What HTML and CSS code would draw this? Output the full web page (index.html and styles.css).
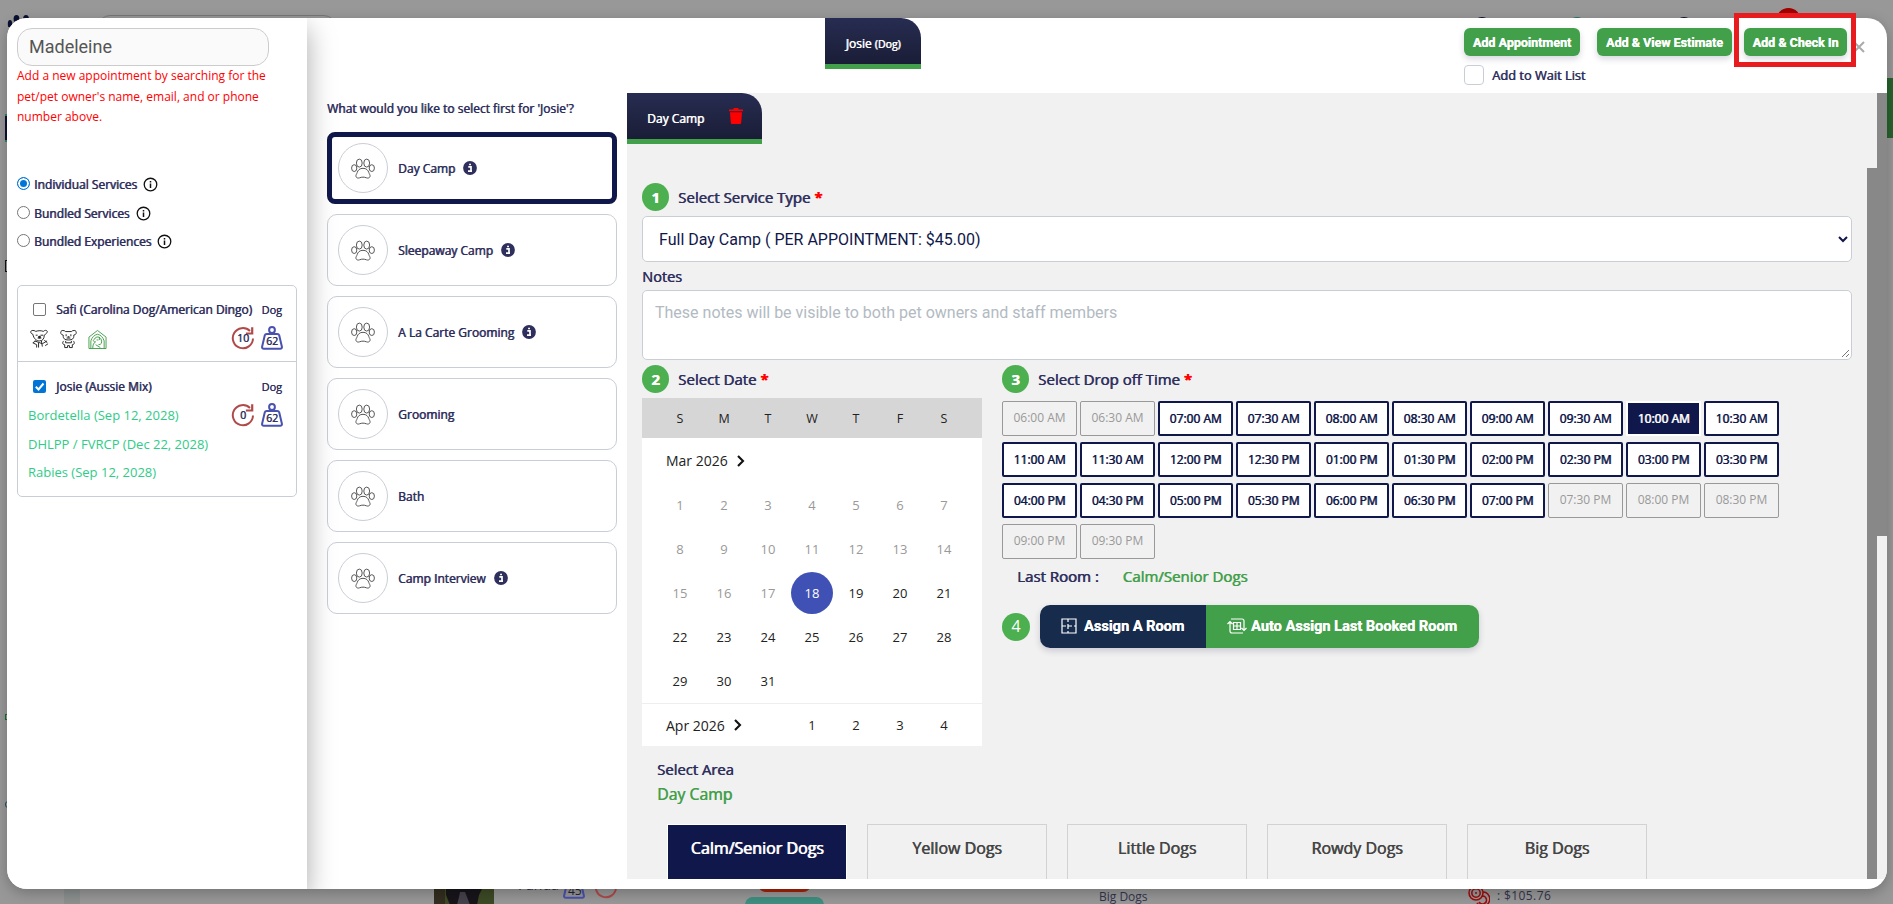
FILE: index.html
```
<!DOCTYPE html>
<html lang="en">
<head>
  <meta charset="UTF-8">
  <meta name="viewport" content="width=device-width, initial-scale=1.0">
  <title>Add Appointment</title>
  <link rel="stylesheet" href="styles.css">
</head>
<body>
  <!-- shared icons -->
  <svg class="sprite" aria-hidden="true">
    <symbol id="paw" viewBox="0 0 24 20">
      <g fill="none" stroke="#555" stroke-width="1">
        <ellipse cx="8.3" cy="4.6" rx="2.9" ry="4"/>
        <ellipse cx="15.7" cy="4.6" rx="2.9" ry="4"/>
        <ellipse cx="3.2" cy="9.6" rx="2.6" ry="3.4"/>
        <ellipse cx="20.8" cy="9.6" rx="2.6" ry="3.4"/>
        <path d="M12 9.8c-3.4 0-5.2 2-5.8 4.2-.5 1.8-1.6 2.4-1.2 4 .4 1.500 2.200 1.900 3.600 1.300 2.200-.9 4.600-.9 6.800 0 1.400.6 3.200.2 3.600-1.300.4-1.600-.7-2.200-1.200-4-.6-2.200-2.400-4.200-5.800-4.200z"/>
      </g>
    </symbol>
    <symbol id="info-o" viewBox="0 0 16 16">
      <circle cx="8" cy="8" r="6.700" fill="none" stroke="#111" stroke-width="1.400"/>
      <path d="M8 7v4.600M8 4.200v1.700" stroke="#111" stroke-width="1.600"/>
    </symbol>
    <symbol id="info" viewBox="0 0 14 14">
      <circle cx="7" cy="7" r="6.900" fill="#2f2f5d"/>
      <path d="M5.300 5.800h2.700v4.200M5 10.100h4M6.100 3.500h1.900" fill="none" stroke="#fff" stroke-width="1.700"/>
    </symbol>
    <symbol id="cycle" viewBox="0 0 24 24">
      <path d="M22 12.500A10.100 10.100 0 1 1 19 5" fill="none" stroke="#b04a4a" stroke-width="2"/>
      <path d="M21.200 1.200v6.300h-6.300" fill="none" stroke="#b04a4a" stroke-width="2.200"/>
    </symbol>
    <symbol id="weight" viewBox="0 0 22 24">
      <circle cx="11" cy="4" r="2.900" fill="none" stroke="#4a52b0" stroke-width="2"/>
      <path d="M5.700 7.900h10.600q1.500 0 1.900 1.400l2.700 11.400q.3 2-1.700 2H2.800q-2 0-1.700-2L3.800 9.300q.4-1.400 1.900-1.400z" fill="none" stroke="#4a52b0" stroke-width="2"/>
    </symbol>
    <symbol id="chevron" viewBox="0 0 8 12">
      <path d="M1 1l5 5-5 5" fill="none" stroke="#111" stroke-width="2.100"/>
    </symbol>
  </svg>

  <!-- dimmed dashboard behind the modal -->
  <div class="backdrop">
    <svg class="page-logo" viewBox="0 0 24 12" width="24" height="12"><g fill="#0a1030"><ellipse cx="3" cy="9" rx="2.200" ry="4"/><ellipse cx="9.500" cy="4" rx="2.900" ry="4"/><ellipse cx="19" cy="4" rx="2.900" ry="4"/></g></svg>
    <div class="page-search"></div>
    <i class="dot dot-1"></i><i class="dot dot-2"></i><i class="dot dot-3"></i><i class="dot dot-4"></i>
    <div class="page-green"></div>
    <div class="edge edge-navy"></div>
    <div class="edge edge-box"></div>
    <div class="edge edge-green"></div>
    <div class="edge edge-teal"></div>
    <div class="page-strip"></div>
    <svg class="page-photo" viewBox="0 0 60 16" width="60" height="16">
      <rect width="60" height="16" fill="#3d4a25"/>
      <path d="M12 0h36l-3 6-2 10H16L12 6z" fill="#17151a"/>
      <path d="M26 3h5l2 5 3 8H23l2-8z" fill="#45424c"/>
      <path d="M0 0h11v16H0z" fill="#332e20"/>
    </svg>
    <span class="page-owner">Funda</span>
    <svg class="page-weight" width="22" height="24"><use href="#weight"/></svg>
    <span class="page-lbs">45</span>
    <svg class="page-cycle" width="24" height="24"><use href="#cycle"/></svg>
    <div class="pill pill-red"></div>
    <div class="pill pill-teal"></div>
    <span class="page-room">Big Dogs</span>
    <svg class="page-coin" viewBox="0 0 22 20" width="22" height="20"><g fill="none" stroke="#a00b0b" stroke-width="1.500"><circle cx="8" cy="6" r="7"/><circle cx="8" cy="6" r="4.200"/><path d="M15 5a7 7 0 1 1-6 11M14 9a4 4 0 1 1-3 6"/></g><circle cx="8" cy="6" r="1" fill="#a00b0b"/></svg>
    <span class="page-price">: $105.76</span>
  </div>

  <div class="modal">
    <aside class="sidebar">
      <div class="search">Madeleine</div>
      <p class="hint">Add a new appointment by searching for the<br>pet/pet owner's name, email, and or phone<br>number above.</p>

      <div class="service-kinds">
        <label class="kind"><span class="radio on"></span>Individual Services<svg width="15" height="15"><use href="#info-o"/></svg></label>
        <label class="kind"><span class="radio"></span>Bundled Services<svg width="15" height="15"><use href="#info-o"/></svg></label>
        <label class="kind"><span class="radio"></span>Bundled Experiences<svg width="15" height="15"><use href="#info-o"/></svg></label>
      </div>

      <div class="pets">
        <div class="pet">
          <div class="pet-head"><span class="check"></span><span class="pet-name">Safi (Carolina Dog/American Dingo)</span><span class="species">Dog</span></div>
          <div class="pet-info">
            <div class="pet-icons">
              <svg class="pet-icon" viewBox="0 0 20 20" width="19" height="20"><g fill="none" stroke="#222" stroke-width="1"><path d="M3 5c-3-1-3-4 0-4 2 0 3 1 3 1 3-1 6-1 8 0 2-2 5-1 4 1s-2 2-3 3c0 4-2 6-5 6S4 10 3 5z"/><path d="M6 6h2M11 6h3M8 9h4M6 12l-3 2 4 2v3M12 12l1 6M15 11l3 3M13 15l5-3M16 17l3-2M9 14v5M5 12l8 3"/></g><circle cx="10" cy="8" r="1.500" fill="#222"/></svg>
              <svg class="pet-icon" viewBox="0 0 20 20" width="19" height="20"><g fill="none" stroke="#222" stroke-width="1"><path d="M4.500 6C1 5.500 1 1 4 1q2 0 3 1.200h6Q14 1 16 1c3 0 3 4.500-.5 5 .5 3.500-1.500 5-5.500 5S4 9.500 4.500 6z"/><path d="M8 9h4M5 12c-2 2-1 4 1 4M15 12c2 2 1 4-1 4M7 12v2h6v-2M6 16v3h3v-2h2v2h3v-3"/></g><path d="M7 5h1v2H7zM12 5h1v2h-1zM9 7h2v1.500H9z" fill="#222"/></svg>
              <svg class="pet-icon" viewBox="0 0 20 20" width="19" height="20"><g fill="none" stroke="#43a04a" stroke-width="1"><path d="M1 20V8l9-7 9 7v12zM3 20v-8q2-6 7-7 5 1 7 7v8M5 20c0-4 1-6 3-7-3 0-3-2-1-3 1-3 6-3 7 1 1 3 0 5-3 5M8 16l5 3M9 11h2M12 8v3"/></g></svg>
            </div>
            <div class="badges">
              <span class="badge"><svg width="24" height="24"><use href="#cycle"/></svg><b>10</b></span>
              <span class="badge weight"><svg width="22" height="24"><use href="#weight"/></svg><b>62</b></span>
            </div>
          </div>
        </div>
        <div class="pet">
          <div class="pet-head"><span class="check on"><svg viewBox="0 0 13 13" width="13" height="13"><path d="M2.800 6.800l2.700 2.700 5-6" fill="none" stroke="#fff" stroke-width="2"/></svg></span><span class="pet-name">Josie (Aussie Mix)</span><span class="species">Dog</span></div>
          <div class="pet-info">
            <ul class="vaccines">
              <li>Bordetella (Sep 12, 2028)</li>
              <li>DHLPP / FVRCP (Dec 22, 2028)</li>
              <li>Rabies (Sep 12, 2028)</li>
            </ul>
            <div class="badges">
              <span class="badge"><svg width="24" height="24"><use href="#cycle"/></svg><b>0</b></span>
              <span class="badge weight"><svg width="22" height="24"><use href="#weight"/></svg><b>62</b></span>
            </div>
          </div>
        </div>
      </div>
    </aside>

    <main class="main">
      <header class="topbar">
        <div class="tab pet-tab">Josie <small>(Dog)</small></div>
        <div class="actions">
          <div class="action-row">
            <button class="btn add">Add Appointment</button>
            <button class="btn estimate">Add &amp; View Estimate</button>
            <button class="btn checkin">Add &amp; Check In</button>
          </div>
          <label class="wait"><span class="wait-box"></span>Add to Wait List</label>
        </div>
        <svg class="close" viewBox="0 0 12 12" width="12" height="12"><path d="M1 1l10 10M11 1L1 11" stroke="#aaa" stroke-width="2"/></svg>
      </header>

      <div class="content">
        <section class="services">
          <h2 class="services-title">What would you like to select first for 'Josie'?</h2>
          <div class="service selected"><span class="paw"><svg width="24" height="21"><use href="#paw"/></svg></span>Day Camp<svg class="info" width="14" height="14"><use href="#info"/></svg></div>
          <div class="service"><span class="paw"><svg width="24" height="21"><use href="#paw"/></svg></span>Sleepaway Camp<svg class="info" width="14" height="14"><use href="#info"/></svg></div>
          <div class="service"><span class="paw"><svg width="24" height="21"><use href="#paw"/></svg></span>A La Carte Grooming<svg class="info" width="14" height="14"><use href="#info"/></svg></div>
          <div class="service"><span class="paw"><svg width="24" height="21"><use href="#paw"/></svg></span>Grooming</div>
          <div class="service"><span class="paw"><svg width="24" height="21"><use href="#paw"/></svg></span>Bath</div>
          <div class="service"><span class="paw"><svg width="24" height="21"><use href="#paw"/></svg></span>Camp Interview<svg class="info" width="14" height="14"><use href="#info"/></svg></div>
        </section>

        <section class="details">
          <div class="detail-tabs">
            <div class="tab camp-tab">Day Camp
              <svg viewBox="0 0 14 16" width="14" height="16"><path d="M0 1.500h4L5 0h4l1 1.500h4v1.800H0zM1 4.300h12l-.8 10.500q-.1 1.200-1.300 1.200H3.100q-1.200 0-1.300-1.200z" fill="#f00"/></svg>
            </div>
          </div>
          <div class="scroller">
            <div class="form">
              <h3 class="step"><span class="num">1</span>Select Service Type <em>*</em></h3>
              <div class="select">Full Day Camp ( PER APPOINTMENT: $45.00)<svg viewBox="0 0 10 7" width="10" height="7"><path d="M1 1l4 4 4-4" fill="none" stroke="#10174a" stroke-width="2"/></svg></div>
              <h3 class="notes-label">Notes</h3>
              <div class="notes">These notes will be visible to both pet owners and staff members
                <svg viewBox="0 0 9 9" width="9" height="9"><path d="M1 8l7-7M5 8l3-3" stroke="#777" stroke-width="1"/></svg>
              </div>

              <div class="schedule">
                <div class="date">
                  <h3 class="step"><span class="num">2</span>Select Date <em>*</em></h3>
                  <div class="calendar">
                    <div class="week head"><span>S</span><span>M</span><span>T</span><span>W</span><span>T</span><span>F</span><span>S</span></div>
                    <div class="month">Mar 2026<svg width="8" height="12"><use href="#chevron"/></svg></div>
                    <div class="week past"><span>1</span><span>2</span><span>3</span><span>4</span><span>5</span><span>6</span><span>7</span></div>
                    <div class="week past"><span>8</span><span>9</span><span>10</span><span>11</span><span>12</span><span>13</span><span>14</span></div>
                    <div class="week"><span class="off">15</span><span class="off">16</span><span class="off">17</span><span class="today">18</span><span>19</span><span>20</span><span>21</span></div>
                    <div class="week"><span>22</span><span>23</span><span>24</span><span>25</span><span>26</span><span>27</span><span>28</span></div>
                    <div class="week"><span>29</span><span>30</span><span>31</span></div>
                    <div class="week next"><span class="month-name">Apr 2026<svg width="8" height="12"><use href="#chevron"/></svg></span><span>1</span><span>2</span><span>3</span><span>4</span></div>
                  </div>
                </div>

                <div class="time">
                  <h3 class="step"><span class="num">3</span>Select Drop off Time <em>*</em></h3>
                  <div class="slots">
                    <span class="slot off">06:00 AM</span><span class="slot off">06:30 AM</span><span class="slot">07:00 AM</span><span class="slot">07:30 AM</span><span class="slot">08:00 AM</span>
                    <span class="slot">08:30 AM</span><span class="slot">09:00 AM</span><span class="slot">09:30 AM</span><span class="slot active">10:00 AM</span><span class="slot">10:30 AM</span>
                    <span class="slot">11:00 AM</span><span class="slot">11:30 AM</span><span class="slot">12:00 PM</span><span class="slot">12:30 PM</span><span class="slot">01:00 PM</span>
                    <span class="slot">01:30 PM</span><span class="slot">02:00 PM</span><span class="slot">02:30 PM</span><span class="slot">03:00 PM</span><span class="slot">03:30 PM</span>
                    <span class="slot">04:00 PM</span><span class="slot">04:30 PM</span><span class="slot">05:00 PM</span><span class="slot">05:30 PM</span><span class="slot">06:00 PM</span>
                    <span class="slot">06:30 PM</span><span class="slot">07:00 PM</span><span class="slot off">07:30 PM</span><span class="slot off">08:00 PM</span><span class="slot off">08:30 PM</span>
                    <span class="slot off">09:00 PM</span><span class="slot off">09:30 PM</span>
                  </div>
                  <div class="last-room"><span>Last Room :</span><span class="green">Calm/Senior Dogs</span></div>
                  <div class="assign">
                    <span class="num four">4</span>
                    <div class="assign-group">
                      <button class="assign-btn navy"><svg viewBox="0 0 16 16" width="16" height="16"><path d="M1 1h14v14H1zM7 1v3M7 6v5M7 13v2M1 8h4M7 8h4M13 8h2" fill="none" stroke="#fff" stroke-width="1.200"/></svg>Assign A Room</button>
                      <button class="assign-btn"><svg viewBox="0 0 20 16" width="20" height="16"><path d="M4 1h11q2 0 2 2v9M14.500 10l2.500 2.500 2.500-2.500M16 15H5q-2 0-2-2V4M.5 6L3 3.500 5.500 6M6.500 4.500h7v7h-7zM10 4.500v7M6.500 8h7" fill="none" stroke="#fff" stroke-width="1.200"/></svg>Auto Assign Last Booked Room</button>
                    </div>
                  </div>
                </div>
              </div>

              <div class="area">
                <h3 class="area-title">Select Area</h3>
                <h3 class="area-title green">Day Camp</h3>
                <div class="rooms">
                  <span class="room active">Calm/Senior Dogs</span>
                  <span class="room">Yellow Dogs</span>
                  <span class="room">Little Dogs</span>
                  <span class="room">Rowdy Dogs</span>
                  <span class="room">Big Dogs</span>
                </div>
              </div>
            </div>
            <div class="thumb"></div>
          </div>
        </section>
        <div class="track"><div class="track-thumb"></div></div>
      </div>
    </main>
  </div>

  <div class="highlight"></div>
</body>
</html>
```
FILE: styles.css
```
* { box-sizing: border-box; }
body { margin: 0; width: 1893px; height: 904px; overflow: hidden; position: relative; background: #989898; font-family: 'Open Sans', 'Noto Sans', sans-serif; color: #2f2f5d; }
h2, h3, p, ul { margin: 0; padding: 0; font-weight: 400; }
ul { list-style: none; }
svg { display: block; flex: none; }
button { border: none; margin: 0; padding: 0; font-family: Roboto, sans-serif; font-weight: 700; color: #fff; background: #43a04a; text-shadow: .3px 0 currentColor; }
.sprite { position: absolute; width: 0; height: 0; }

/* semi-bold look without changing the text width */
.kind, .pet-name, .tab, .wait, .services-title, .service, .step, .notes-label, .slot, .last-room, .area-title, .room { text-shadow: .6px 0 currentColor; }

/* dimmed page */
.backdrop { position: absolute; inset: 0; overflow: hidden; }
.backdrop > * { position: absolute; }
.page-logo { left: 7px; top: 15px; }
.page-search { left: 98px; top: 15px; width: 238px; height: 30px; border: 1px solid #777; border-radius: 12px; }
.dot { width: 16px; height: 16px; border-radius: 50%; top: 17px; background: #0a1030; }
.dot-1 { left: 1474px; }
.dot-2 { left: 1569px; background: #1f7a66; }
.dot-3 { left: 1676px; }
.dot-4 { left: 1776px; top: 8px; width: 25px; height: 25px; background: #a00000; }
.page-green { left: 1880px; top: 78px; width: 13px; height: 60px; background: #28632f; }
.edge { left: 5px; width: 6px; }
.edge-navy { top: 114px; height: 28px; background: #0a1030; border-top: 2px solid #2f8a5a; border-bottom: 2px solid #2f8a5a; }
.edge-box { top: 260px; height: 12px; border: 1px solid #111; }
.edge-green { top: 714px; height: 6px; border: 1px solid #16702a; }
.edge-teal { top: 801px; height: 7px; border: 1px solid #1c5260; border-radius: 3px; }
.page-strip { left: 64px; top: 880px; width: 16px; height: 24px; background: #8c908f; }
.page-photo { left: 434px; top: 889px; }
.page-owner { left: 518px; top: 875px; font-size: 14px; color: #33334d; }
.page-weight { left: 563px; top: 875px; }
.page-lbs { left: 568px; top: 882px; font-size: 12px; color: #22223c; }
.page-cycle { left: 594px; top: 875px; }
.pill { border-radius: 8px; }
.pill-red { left: 758px; top: 876px; width: 53px; height: 16px; background: #a52308; }
.pill-teal { left: 745px; top: 897px; width: 79px; height: 18px; background: #3f8f80; }
.page-room, .page-price { top: 888px; font-size: 12px; line-height: 18px; color: #33334d; }
.page-room { left: 1099px; }
.page-coin { left: 1468px; top: 887px; }
.page-price { left: 1497px; top: 887px; letter-spacing: .4px; }

.modal { position: relative; display: flex; width: 1880px; height: 871px; margin: 18px 0 0 7px; background: #fff; border-radius: 20px; overflow: hidden; box-shadow: 0 4px 14px rgba(0,0,0,.25); }

/* sidebar */
.sidebar { position: relative; width: 300px; flex: none; padding: 10px; background: #fff; box-shadow: 0 10px 26px rgba(0,0,0,.34); }
.search { width: 252px; height: 38px; padding-left: 11px; border: 1px solid #ccc; border-radius: 15px; background: #fafafa; font: 18px/36px Roboto, sans-serif; color: #555; }
.hint { font-size: 12px; line-height: 20.500px; color: #f00; white-space: nowrap; }
.service-kinds { margin-top: 43px; }
.kind { display: flex; align-items: center; height: 28.500px; font-size: 12px; }
.kind svg { margin-left: 6px; }
.radio { width: 13px; height: 13px; margin-right: 4px; border: 1px solid #767676; border-radius: 50%; background: #fff; position: relative; top: -1px; }
.radio.on { border-color: #0075d7; background: #0075d7; box-shadow: inset 0 0 0 2px #fff; }

.pets { margin-top: 29px; border: 1px solid #c9ced6; border-radius: 5px; }
.pet { padding: 13px 13px 0 10px; height: 75px; }
.pet + .pet { height: 135px; padding-top: 14px; border-top: 1px solid #c9ced6; }
.pet-head { display: flex; align-items: center; height: 20px; padding: 0 1px 0 5px; }
.check { width: 13px; height: 13px; border: 1px solid #767676; border-radius: 2px; }
.check.on { border: none; background: #0075d7; }
.pet-name { margin-left: 10px; font-size: 12px; white-space: nowrap; }
.species { margin-left: auto; font-size: 11px; text-shadow: .3px 0 currentColor; }
.pet-info { display: flex; justify-content: space-between; align-items: flex-start; }
.pet-icons { display: flex; gap: 10px; margin: 10px 0 0 2px; }
.badges { display: flex; gap: 6px; margin-top: 7px; }
.badge { position: relative; }
.badge b { position: absolute; inset: 5px 0 0; text-align: center; font-size: 10.500px; line-height: 14px; font-weight: 400; text-shadow: .4px 0 currentColor; }
.badge.weight b { top: 8px; }
.vaccines { font-size: 13px; line-height: 28.500px; color: #2ecc87; white-space: nowrap; margin-top: 5px; }

/* header */
.main { flex: 1; display: flex; flex-direction: column; min-width: 0; }
.topbar { display: flex; height: 75px; padding-left: 518px; }
.tab { height: 51px; border-bottom: 5px solid #43a04a; border-top-right-radius: 20px; background: linear-gradient(#272d52, #1a1d36); color: #fff; font-size: 12px; white-space: nowrap; }
.pet-tab { width: 96px; text-align: center; line-height: 52px; }
.pet-tab small { font-size: 10.500px; }
.actions { margin-left: 543px; padding-top: 10px; }
.action-row { display: flex; }
.btn { height: 28px; border-radius: 6px; font-size: 12.500px; box-shadow: 0 3px 6px rgba(50,50,93,.2); white-space: nowrap; }
.add { width: 116px; }
.estimate { width: 135px; margin-left: 17px; }
.checkin { width: 103px; margin-left: 12px; }
.wait { display: flex; align-items: center; margin-top: 9px; height: 20px; font-size: 12.800px; line-height: 22px; }
.wait-box { width: 20px; height: 20px; margin-right: 8px; border: 1px solid #c9ced6; border-radius: 4px; }
.close { margin: 23px 0 0 6px; }
.highlight { position: absolute; left: 1734px; top: 13px; width: 122px; height: 54px; border: 5px solid #e81c1e; }

/* service list */
.content { flex: 1; display: flex; min-height: 0; margin-bottom: 10px; }
.services { width: 320px; flex: none; padding: 6px 10px 0 20px; }
.services-title { height: 33px; font-size: 12px; line-height: 19px; white-space: nowrap; }
.service { display: flex; align-items: center; height: 72px; margin-bottom: 10px; padding-left: 10px; border: 1px solid #c9ced6; border-radius: 10px; font-size: 12px; }
.service.selected { padding-left: 6px; border: 5px solid #10174a; border-radius: 8px; }
.paw { display: flex; align-items: center; justify-content: center; width: 50px; height: 50px; margin-right: 10px; border: 1px solid #c9ced6; border-radius: 50%; }
.info { margin-left: 8px; }

/* booking form */
.details { flex: 1; min-width: 0; display: flex; flex-direction: column; background: #f1f1f1; }
.detail-tabs { height: 75px; flex: none; }
.camp-tab { display: flex; align-items: center; justify-content: space-between; width: 135px; padding: 5px 19px 0 20px; }
.camp-tab svg { margin-top: -6px; }
.scroller { flex: 1; display: flex; min-height: 0; }
.form { flex: 1; padding: 15px 15px 0 15px; overflow: hidden; }
.thumb { width: 10px; background: #888; }
.track { width: 10px; background: #f1f1f1; }
.track-thumb { height: 443px; background: #888; }
.step { display: flex; align-items: center; height: 28px; font-size: 15px; white-space: pre; }
.step em { color: #f00; font-style: normal; font-weight: 700; }
.num { display: flex; align-items: center; justify-content: center; width: 27px; height: 28px; margin-right: 9px; border-radius: 50%; background: #4caf50; color: #fff; font-size: 15px; font-weight: 700; }
.four { width: 28px; margin-right: 10px; font-size: 16px; font-weight: 400; line-height: 26px; padding-bottom: 1px; }
.select { display: flex; align-items: center; justify-content: space-between; height: 46px; margin-top: 5px; padding: 0 3px 0 16px; border: 1px solid #c9ced6; border-radius: 5px; background: #fff; font: 16px Roboto, sans-serif; color: #10174a; }
.notes-label { height: 28px; font-size: 14.500px; line-height: 29px; }
.notes { position: relative; height: 70px; padding: 12px; border: 1px solid #c9ced6; border-radius: 5px; background: #fff; font: 16px/20px Roboto, sans-serif; color: #b2bac2; }
.notes svg { position: absolute; right: 1px; bottom: 1px; }
.schedule { display: flex; gap: 20px; margin-top: 5px; }
.date { width: 340px; }
.calendar { margin-top: 5px; height: 348px; background: #fff; color: #222; font-size: 13px; }
.week { display: grid; grid-template-columns: repeat(7, 44px); padding: 0 16px; height: 44px; align-items: center; justify-items: center; }
.week.head { height: 40px; background: #d6d6d6; font-size: 12.500px; }
.past, .off { color: #999; }
.month { display: flex; align-items: center; height: 45px; padding-left: 24px; font-size: 14px; }
.month svg, .month-name svg { margin-left: 9px; }
.today { width: 42px; height: 42px; border-radius: 50%; background: #3f51b5; color: #fff; text-align: center; line-height: 42px; }
.week.next { border-top: 1px solid #eee; height: 43px; }
.month-name { grid-column: span 3; justify-self: start; display: flex; align-items: center; padding-left: 8px; font-size: 14px; }

.slots { display: grid; grid-template-columns: repeat(10, 75px); gap: 6px 3px; margin-top: 8px; }
.slot { height: 35px; border: 2px solid #10174a; border-radius: 2px; background: #fff; color: #10174a; font-size: 12px; line-height: 32px; text-align: center; }
.slot.off { border: 1px solid #999; background: #f1f1f1; color: #999; line-height: 31px; text-shadow: none; }
.slot.active { background: #10174a; border-color: #fff; border-radius: 0; color: #fff; text-shadow: .8px 0 currentColor; }
.last-room { display: flex; gap: 24px; margin-top: 7px; padding-left: 15px; font-size: 15px; line-height: 20px; }
.green { color: #43a04a; }
.assign { display: flex; align-items: center; margin-top: 19px; }
.assign-group { display: flex; border-radius: 10px; overflow: hidden; box-shadow: 0 3px 6px rgba(50,50,93,.2); }
.assign-btn { display: flex; align-items: center; height: 43px; width: 273px; padding: 0 0 1px 21px; font-size: 14.550px; gap: 4px; white-space: nowrap; }
.assign-btn.navy { width: 166px; gap: 7px; background: #172b4d; }

.area { padding: 11px 15px 0; }
.area-title { height: 25px; font-size: 14.800px; line-height: 25px; }
.area-title.green { font-size: 15.800px; }
.rooms { display: flex; gap: 20px; margin: 17px 0 0 10px; }
.room { width: 180px; height: 90px; flex: none; border: 1px solid #d2d2d2; color: #444; font-size: 16px; line-height: 46px; text-align: center; }
.room.active { border-color: #fff; background: #10174a; color: #fff; text-shadow: .9px 0 currentColor; }
```
